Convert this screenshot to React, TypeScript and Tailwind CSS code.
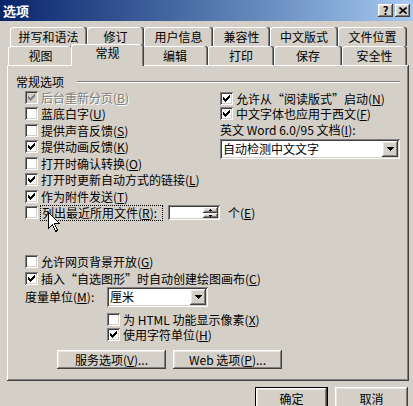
import type { ReactNode } from "react";

const raised =
  "shadow-[inset_-1px_-1px_0_#404040,inset_1px_1px_0_#ffffff,inset_-2px_-2px_0_#808080,inset_2px_2px_0_#e8e6e1]";
const sunken =
  "shadow-[inset_1px_1px_0_#808080,inset_-1px_-1px_0_#ffffff,inset_2px_2px_0_#404040,inset_-2px_-2px_0_#d4d0c8]";
const tabEdge =
  "shadow-[inset_-1px_0_0_#404040,inset_-2px_0_0_#808080,inset_1px_1px_0_#ffffff]";

const checkPath =
  "M3 5h1v3h-1zM4 6h1v3h-1zM5 7h1v3h-1zM6 6h1v3h-1zM7 5h1v3h-1zM8 4h1v3h-1zM9 3h1v3h-1z";

function K({ c }: { c: string }) {
  return (
    <>
      (<span className="underline underline-offset-1">{c}</span>)
    </>
  );
}

function Check({ on, disabled }: { on?: boolean; disabled?: boolean }) {
  return (
    <span
      className={`block size-[13px] shrink-0 ${disabled ? "bg-[#d4d0c8]" : "bg-white"} ${sunken}`}
    >
      {on ? (
        <svg width="13" height="13" shapeRendering="crispEdges" className="block">
          <path d={checkPath} fill={disabled ? "#808080" : "#000000"} />
        </svg>
      ) : null}
    </span>
  );
}

function Option({
  label,
  k,
  on,
  disabled,
  className = "",
}: {
  label: ReactNode;
  k: string;
  on?: boolean;
  disabled?: boolean;
  className?: string;
}) {
  return (
    <div className={`flex items-center gap-[3px] whitespace-nowrap ${className}`}>
      <Check on={on} disabled={disabled} />
      <span
        className={`leading-[13px] ${disabled ? "text-[#808080] [text-shadow:1px_1px_0_#ffffff]" : ""}`}
      >
        {label}
        <K c={k} />
      </span>
    </div>
  );
}

function DownArrow() {
  return (
    <svg width="7" height="4" shapeRendering="crispEdges" className="block">
      <path d="M0 0h7v1h-1v1h-1v1h-1v1h-1v-1h-1v-1h-1v-1h-1z" fill="#000000" />
    </svg>
  );
}

function Combo({ value, className = "" }: { value: string; className?: string }) {
  return (
    <div className={`flex h-[20px] shrink-0 items-center bg-white ${sunken} ${className}`}>
      <span className="flex-1 pl-[3px] leading-none">{value}</span>
      <span
        className={`mr-[2px] flex h-[16px] w-[16px] items-center justify-center bg-[#d4d0c8] ${raised}`}
      >
        <DownArrow />
      </span>
    </div>
  );
}

function Button({
  children,
  className = "",
  isDefault,
}: {
  children: ReactNode;
  className?: string;
  isDefault?: boolean;
}) {
  const face = (
    <span className={`flex h-full w-full items-center justify-center bg-[#d4d0c8] ${raised}`}>
      {children}
    </span>
  );
  return isDefault ? (
    <div className={`border border-black ${className}`}>{face}</div>
  ) : (
    <div className={className}>{face}</div>
  );
}

function Tab({ label, w }: { label: string; w: string }) {
  return (
    <div
      className={`flex h-[19px] items-center justify-center rounded-t-[3px] bg-[#d4d0c8] ${tabEdge} ${w}`}
    >
      {label}
    </div>
  );
}

export default function App() {
  return (
    <div className="relative h-[406px] w-[413px] overflow-hidden bg-[#d4d0c8] font-['Noto_Sans_CJK_SC',sans-serif] text-[12px] leading-[14px] text-black">
      {/* title bar */}
      <div className="flex h-[21px] items-center justify-between bg-gradient-to-r from-[#0a246a] to-[#a6caf0] pr-[3px]">
        <span className="pl-[3px] text-[13px] font-bold text-white">选项</span>
        <div className="flex gap-[2px]">
          <span
            className={`flex h-[13px] w-[15px] items-center justify-center bg-[#d4d0c8] text-[11px] font-bold leading-none ${raised}`}
          >
            ?
          </span>
          <span
            className={`flex h-[13px] w-[15px] items-center justify-center bg-[#d4d0c8] ${raised}`}
          >
            <svg width="8" height="7" className="block">
              <path d="M0.5 0.5L7.5 6.5M7.5 0.5L0.5 6.5" stroke="#000" strokeWidth="1.6" />
            </svg>
          </span>
        </div>
      </div>

      {/* tabs */}
      <div className="mt-[6px] flex pl-[10px]">
        <Tab label="拼写和语法" w="w-[77px]" />
        <Tab label="修订" w="w-[57px]" />
        <Tab label="用户信息" w="w-[69px]" />
        <Tab label="兼容性" w="w-[57px]" />
        <Tab label="中文版式" w="w-[68px]" />
        <Tab label="文件位置" w="w-[69px]" />
      </div>
      <div className="flex h-[19px] items-start pl-[8px]">
        <Tab label="视图" w="w-[65px]" />
        <div
          className={`relative z-10 -mx-[2px] -mt-[2px] flex h-[22px] w-[73px] items-start justify-center rounded-t-[3px] bg-[#d4d0c8] pt-[2px] ${tabEdge}`}
        >
          常规
        </div>
        <Tab label="编辑" w="w-[66px]" />
        <Tab label="打印" w="w-[66px]" />
        <Tab label="保存" w="w-[68px]" />
        <Tab label="安全性" w="w-[65px]" />
      </div>

      {/* panel */}
      <div className="ml-[7px] flex h-[316px] w-[402px] flex-col pt-[10px] shadow-[inset_-1px_-1px_0_#404040,inset_1px_1px_0_#ffffff,inset_-2px_-2px_0_#808080]">
        <div className="flex h-[14px] items-center px-[9px]">
          <span>常规选项</span>
          <span className="ml-[13px] h-[2px] flex-1 border-t border-b border-t-[#808080] border-b-white" />
        </div>

        <div className="flex pl-[18px]">
          <div className="flex w-[195px] shrink-0 flex-col">
            <Option label="后台重新分页" k="B" on disabled className="h-[16.5px]" />
            <Option label="蓝底白字" k="U" className="h-[16.5px]" />
            <Option label="提供声音反馈" k="S" className="h-[16.5px]" />
            <Option label="提供动画反馈" k="K" on className="h-[16.5px]" />
            <Option label="打开时确认转换" k="O" className="h-[16.5px]" />
            <Option label="打开时更新自动方式的链接" k="L" on className="h-[16.5px]" />
            <Option label="作为附件发送" k="T" on className="h-[16.5px]" />
            <div className="flex h-[16.5px] items-center gap-[2px] whitespace-nowrap">
              <Check />
              <span className="flex h-[16px] w-[123px] shrink-0 items-center border border-dotted border-black px-[1px] leading-[13px]">
                列出最近所用文件
                <K c="R" />:
              </span>
              <div
                className={`ml-[3px] flex h-[15px] w-[52px] shrink-0 items-center justify-end bg-white pr-[2px] ${sunken}`}
              >
                <div className="flex flex-col">
                  <span
                    className={`flex h-[6px] w-[15px] items-center justify-center bg-[#d4d0c8] ${raised}`}
                  >
                    <svg width="3" height="2" className="block" shapeRendering="crispEdges">
                      <path d="M1 0h1v1h1v1h-3v-1h1z" fill="#000" />
                    </svg>
                  </span>
                  <span
                    className={`flex h-[5px] w-[15px] items-center justify-center bg-[#d4d0c8] ${raised}`}
                  >
                    <svg width="3" height="2" className="block" shapeRendering="crispEdges">
                      <path d="M0 0h3v1h-1v1h-1v-1h-1z" fill="#000" />
                    </svg>
                  </span>
                </div>
              </div>
              <span className="ml-[6px] shrink-0 leading-[13px]">
                个<K c="E" />
              </span>
            </div>
          </div>

          <div className="flex w-[180px] shrink-0 flex-col pt-[2px]">
            <Option label="允许从“阅读版式”启动" k="N" on className="h-[15px]" />
            <Option label="中文字体也应用于西文" k="F" on className="h-[15px]" />
            <div className="flex h-[18px] items-center whitespace-nowrap">
              英文 Word 6.0/95 文档<K c="I" />:
            </div>
            <Combo value="自动检测中文文字" className="w-[180px]" />
          </div>
        </div>

        <div className="mt-[32px] flex flex-col pl-[18px]">
          <Option label="允许网页背景开放" k="G" className="h-[17px]" />
          <Option label="插入“自选图形”时自动创建绘图画布" k="C" on className="h-[17px]" />
          <div className="flex h-[20px] items-center">
            <span className="w-[82px] whitespace-nowrap">
              度量单位<K c="M" />:
            </span>
            <Combo value="厘米" className="w-[101px]" />
          </div>
        </div>

        <div className="mt-[5px] flex flex-col pl-[100px]">
          <Option label="为 HTML 功能显示像素" k="X" className="h-[15px]" />
          <Option label="使用字符单位" k="H" on className="h-[15px]" />
        </div>

        <div className="mt-[8px] flex gap-[7px] pl-[50px]">
          <Button className="h-[19px] w-[109px]">
            服务选项<K c="V" />...
          </Button>
          <Button className="h-[19px] w-[109px]">
            Web 选项<K c="P" />...
          </Button>
        </div>
      </div>

      {/* dialog buttons */}
      <div className="mt-[6px] flex justify-end gap-[7px] pr-[5px]">
        <Button isDefault className="h-[23px] w-[73px]">
          确定
        </Button>
        <Button className="h-[23px] w-[73px]">取消</Button>
      </div>

      {/* mouse pointer */}
      <svg
        width="12"
        height="20"
        viewBox="0 0 12 20"
        className="absolute left-[48px] top-[212px]"
        shapeRendering="crispEdges"
      >
        <path
          d="M0.5 0.5V16.5L4.5 12.5L7.5 19.5L9.5 18.5L6.5 11.5H11.5Z"
          fill="#ffffff"
          stroke="#000000"
          strokeWidth="1"
        />
      </svg>
    </div>
  );
}
